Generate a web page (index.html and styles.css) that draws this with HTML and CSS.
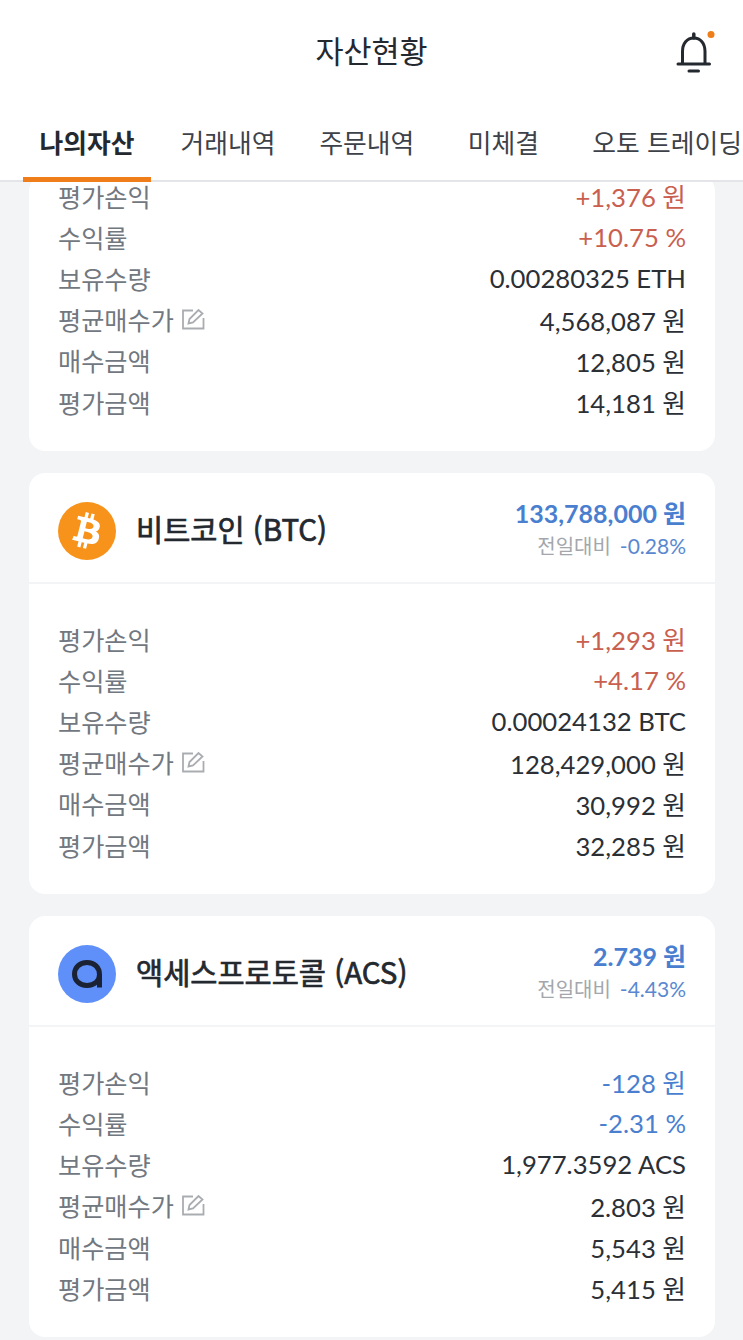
FILE: index.html
```html
<!doctype html>
<html lang="ko">
<head>
<meta charset="utf-8">
<title>자산현황</title>
<link rel="stylesheet" href="styles.css">
</head>
<body>
	<header class="topBar">
		<div class="titleRow">
			<span></span>
			<h1 class="pageTitle">자산현황</h1>
			<svg class="bellIcon" width="40" height="44" viewBox="0 0 40 44" fill="none">
				<path d="M3 33H34.5" stroke="#24282f" stroke-width="3" stroke-linecap="round"/>
				<path d="M7.5 33V20.5C7.5 12.5 12 7 18.8 7S30 12.500 30 20.500V33" stroke="#24282f" stroke-width="3"/>
				<path d="M18.800 3V7" stroke="#24282f" stroke-width="3.500" stroke-linecap="round"/>
				<path d="M14 40H23.500" stroke="#24282f" stroke-width="3" stroke-linecap="round"/>
				<circle cx="36" cy="3.500" r="3.500" fill="#ef7d1a"/>
			</svg>
		</div>
		<nav class="tabs">
			<a class="tab tabActive">나의자산</a>
			<a class="tab">거래내역</a>
			<a class="tab">주문내역</a>
			<a class="tab">미체결</a>
			<a class="tab">오토 트레이딩</a>
		</nav>
	</header>

	<main class="scrollArea">
		<div class="cardList">
			<section class="card">
				<div class="cardBody cardBodyCut">
					<div class="row"><span class="rowLabel">평가손익</span><span class="rowValue up">+1,376 원</span></div>
					<div class="row"><span class="rowLabel">수익률</span><span class="rowValue up">+10.75 %</span></div>
					<div class="row"><span class="rowLabel">보유수량</span><span class="rowValue">0.00280325 ETH</span></div>
					<div class="row">
						<span class="rowLabel">평균매수가
							<svg class="editIcon" width="24" height="22" viewBox="0 0 24 22" fill="none" stroke="#a9adb2" stroke-width="1.800">
								<path d="M12 2.500H2V20.500H22.500V10"/>
								<path d="M7.500 15.500L8.500 11L17.500 2L21.500 5.500L12 14.500Z"/>
							</svg>
						</span>
						<span class="rowValue">4,568,087 원</span>
					</div>
					<div class="row"><span class="rowLabel">매수금액</span><span class="rowValue">12,805 원</span></div>
					<div class="row"><span class="rowLabel">평가금액</span><span class="rowValue">14,181 원</span></div>
				</div>
			</section>

			<section class="card">
				<div class="cardHead">
					<svg class="coinIcon" width="58" height="58" viewBox="0 0 64 64">
						<circle cx="32" cy="32" r="32" fill="#f7931a"/>
						<path fill="#fff" fill-rule="evenodd" d="M46.100 27.441c.637-4.258-2.605-6.547-7.038-8.074l1.438-5.768-3.511-.875-1.400 5.616c-.923-.23-1.871-.447-2.813-.662l1.410-5.653-3.509-.875-1.439 5.766c-.764-.174-1.514-.346-2.242-.527l.004-.018-4.842-1.209-.934 3.750s2.605.597 2.550.634c1.422.355 1.679 1.296 1.636 2.042l-3.938 15.776c-.174.432-.615 1.080-1.609.834.035.051-2.552-.637-2.552-.637l-1.743 4.019 4.569 1.139c.85.213 1.683.436 2.503.646l-1.453 5.834 3.507.875 1.439-5.772c.958.26 1.888.5 2.798.726l-1.434 5.745 3.511.875 1.453-5.823c5.987 1.133 10.489.676 12.384-4.739 1.527-4.360-.076-6.875-3.226-8.515 2.295-.529 4.034-2.043 4.495-5.164zM38.080 38.690c-1.085 4.360-8.426 2.003-10.806 1.412l1.928-7.729c2.380.594 10.012 1.770 8.878 6.317zM39.166 27.378c-.99 3.966-7.100 1.951-9.082 1.457l1.748-7.010c1.982.494 8.367 1.415 7.334 5.553z"/>
					</svg>
					<h2 class="coinName">비트코인 (BTC)</h2>
					<div class="coinPrice">
						<div class="priceNow">133,788,000 원</div>
						<div class="priceDiff"><span class="diffLabel">전일대비</span><span class="diffRate">-0.28%</span></div>
					</div>
				</div>
				<div class="cardBody">
					<div class="row"><span class="rowLabel">평가손익</span><span class="rowValue up">+1,293 원</span></div>
					<div class="row"><span class="rowLabel">수익률</span><span class="rowValue up">+4.17 %</span></div>
					<div class="row"><span class="rowLabel">보유수량</span><span class="rowValue">0.00024132 BTC</span></div>
					<div class="row">
						<span class="rowLabel">평균매수가
							<svg class="editIcon" width="24" height="22" viewBox="0 0 24 22" fill="none" stroke="#a9adb2" stroke-width="1.800">
								<path d="M12 2.500H2V20.500H22.500V10"/>
								<path d="M7.500 15.500L8.500 11L17.500 2L21.500 5.500L12 14.500Z"/>
							</svg>
						</span>
						<span class="rowValue">128,429,000 원</span>
					</div>
					<div class="row"><span class="rowLabel">매수금액</span><span class="rowValue">30,992 원</span></div>
					<div class="row"><span class="rowLabel">평가금액</span><span class="rowValue">32,285 원</span></div>
				</div>
			</section>

			<section class="card">
				<div class="cardHead">
					<svg class="coinIcon" width="58" height="58" viewBox="0 0 58 58" fill="none">
						<circle cx="29" cy="29" r="29" fill="#5f8ff8"/>
						<path d="M41.500 42.500V29.500C41.500 22.500 36.500 17.500 29 17.500S16.500 22.500 16.500 29S21.500 40.500 29 40.500S41.500 36 41.500 29.500" stroke="#1a2233" stroke-width="5"/>
					</svg>
					<h2 class="coinName">액세스프로토콜 (ACS)</h2>
					<div class="coinPrice">
						<div class="priceNow">2.739 원</div>
						<div class="priceDiff"><span class="diffLabel">전일대비</span><span class="diffRate">-4.43%</span></div>
					</div>
				</div>
				<div class="cardBody">
					<div class="row"><span class="rowLabel">평가손익</span><span class="rowValue down">-128 원</span></div>
					<div class="row"><span class="rowLabel">수익률</span><span class="rowValue down">-2.31 %</span></div>
					<div class="row"><span class="rowLabel">보유수량</span><span class="rowValue">1,977.3592 ACS</span></div>
					<div class="row">
						<span class="rowLabel">평균매수가
							<svg class="editIcon" width="24" height="22" viewBox="0 0 24 22" fill="none" stroke="#a9adb2" stroke-width="1.800">
								<path d="M12 2.500H2V20.500H22.500V10"/>
								<path d="M7.500 15.500L8.500 11L17.500 2L21.500 5.500L12 14.500Z"/>
							</svg>
						</span>
						<span class="rowValue">2.803 원</span>
					</div>
					<div class="row"><span class="rowLabel">매수금액</span><span class="rowValue">5,543 원</span></div>
					<div class="row"><span class="rowLabel">평가금액</span><span class="rowValue">5,415 원</span></div>
				</div>
			</section>
		</div>
	</main>
</body>
</html>
```

FILE: styles.css
```css
html, body {
	height: 100%;
}

body {
	margin: 0;
	display: flex;
	flex-direction: column;
	overflow: hidden;
	background-color: #f2f4f6;
	color: #2b2f36;
	font-family: "Noto Sans CJK KR", "Noto Sans", sans-serif;
}

.topBar {
	height: 182px;
	flex: none;
	background-color: #fff;
	position: relative;
	z-index: 1;
}

.titleRow {
	height: 100px;
	display: grid;
	grid-template-columns: 1fr auto 1fr;
	align-items: center;
}

.pageTitle {
	margin: 0;
	font-size: 30.500px;
	font-weight: 400;
	color: #24282f;
}

.bellIcon {
	justify-self: end;
	margin-right: 28px;
	margin-top: 6px;
}

.tabs {
	display: flex;
	gap: 11px;
	height: 82px;
	padding-left: 23px;
	overflow: hidden;
	box-shadow: inset 0 -2px 0 #e3e5e8;
}

.tab {
	flex: none;
	box-sizing: border-box;
	min-width: 123px;
	height: 82px;
	padding: 23px 16.500px 0;
	line-height: 38px;
	font-size: 25.800px;
	text-align: center;
	color: #3d4249;
}

.tabActive {
	margin-right: 2px;
	font-weight: 700;
	color: #24282f;
	border-bottom: 5px solid #ef7d1a;
}

.scrollArea {
	flex: 1;
	overflow: hidden;
}

.cardList {
	display: flex;
	flex-direction: column;
	gap: 22px;
	margin-top: -7px;
	padding: 0 28px 0 29px;
}

.card {
	background-color: #fff;
	border-radius: 16px;
}

.cardHead {
	box-sizing: border-box;
	height: 111px;
	display: flex;
	align-items: center;
	padding: 6px 29px 0;
	border-bottom: 2px solid #f2f4f6;
}

.coinIcon {
	flex: none;
	margin-right: 20px;
}

.coinName {
	margin: -6px 0 0;
	flex: 1;
	font-size: 29.500px;
	font-weight: 400;
	-webkit-text-stroke: 0.7px #24282f;
	color: #24282f;
}

.coinPrice {
	margin-top: -6px;
	text-align: right;
}

.priceNow {
	font-family: Lato, "Noto Sans CJK KR", sans-serif;
	font-size: 25px;
	line-height: 36px;
	font-weight: 700;
	color: #4a7fd0;
}

.priceDiff {
	font-size: 20px;
	line-height: 30px;
}

.diffLabel {
	color: #a3a7ac;
	margin-right: 9px;
}

.diffRate {
	font-family: Lato, "Noto Sans CJK KR", sans-serif;
	font-size: 21px;
	color: #5a88d0;
}

.cardBody {
	padding: 34px 29px 29px;
}

.cardBodyCut {
	padding-top: 0;
	padding-bottom: 29px;
}

.row {
	height: 41.200px;
	display: flex;
	justify-content: space-between;
	align-items: center;
	font-size: 25px;
}

.rowLabel {
	display: flex;
	align-items: center;
	gap: 7px;
	font-size: 25.200px;
	color: #72787f;
}

.rowValue {
	font-family: Lato, "Noto Sans CJK KR", sans-serif;
	font-size: 25.700px;
}

.up {
	color: #c9604f;
}

.down {
	color: #4a7fd0;
}
```
